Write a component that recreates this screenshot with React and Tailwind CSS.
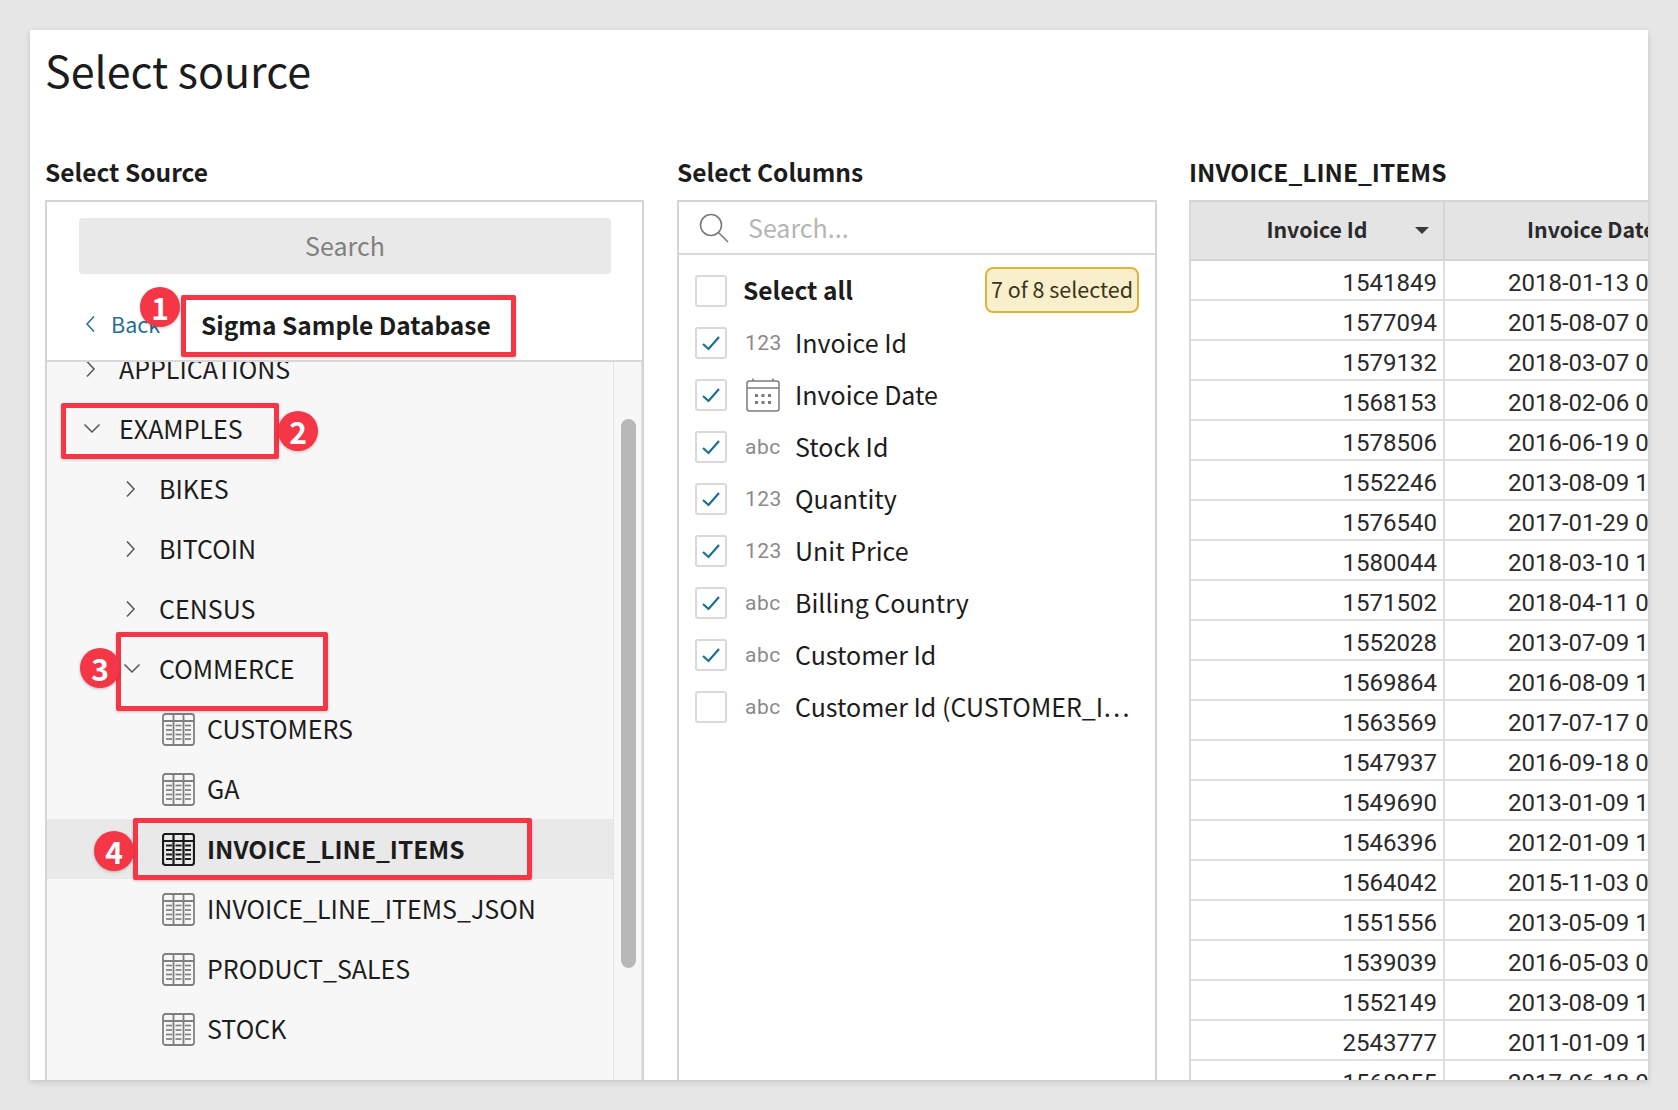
const sans = '"Noto Sans CJK SC", "Source Sans Pro", sans-serif';

function Chevron({ dir = 'right', className = 'text-[#555]' }) {
  const d = {
    right: 'M4 1.5 L11 9 L4 16.5',
    down: 'M1.5 4.5 L9 12 L16.5 4.5',
    left: 'M11 1.5 L4 9 L11 16.5',
  }[dir];
  return (
    <svg width="18" height="18" viewBox="0 0 18 18" fill="none" stroke="currentColor" strokeWidth="1.5" className={className}>
      <path d={d} />
    </svg>
  );
}

function TableIcon({ dark }) {
  const c = dark ? '#1a1a1a' : '#808080';
  const dashes = [];
  for (const x of [4, 13.5, 23]) {
    for (const y of [12.5, 17, 21.5, 26]) {
      dashes.push(<path key={x + '-' + y} d={`M${x} ${y} h6`} strokeWidth={dark ? 2 : 1.7} />);
    }
  }
  return (
    <svg width="33" height="33" viewBox="0 0 33 33" fill="none" stroke={c} strokeWidth={dark ? 2.2 : 1.8} className="shrink-0">
      <rect x="1" y="1" width="31" height="31" rx="2.5" />
      <path d="M1 8 H32 M11.5 1 V32 M21.5 1 V32" />
      {dashes}
    </svg>
  );
}

function TreeRow({ label, depth = 0, open, table, active }) {
  return (
    <div className={`flex h-[60px] items-center ${active ? 'bg-[#e9e9e9]' : ''}`}>
      {table ? (
        <div className="ml-[115px] flex items-center gap-[12px]">
          <TableIcon dark={active} />
          <span className={active ? 'text-[24.5px] font-semibold text-[#1c1c1c]' : ''}>{label}</span>
        </div>
      ) : (
        <div className={`flex items-center ${depth === 0 ? 'ml-[34px]' : 'ml-[74px]'}`}>
          <span className="w-[38px] pl-[2px]">
            <Chevron dir={open ? 'down' : 'right'} />
          </span>
          <span>{label}</span>
        </div>
      )}
    </div>
  );
}

function Badge({ n, className }) {
  return (
    <div className={`absolute flex h-[40px] w-[40px] items-center justify-center rounded-full bg-[#f53647] text-[30px] font-bold leading-none text-white shadow-[0_1px_3px_rgba(0,0,0,0.25)] ${className}`}>
      {n}
    </div>
  );
}

function RedBox({ className }) {
  return <div className={`absolute rounded-[2px] border-[5px] border-[#f53647] shadow-[0_1px_3px_rgba(0,0,0,0.2)] ${className}`} />;
}

function Check({ on }) {
  return (
    <div className="flex h-[32px] w-[32px] shrink-0 items-center justify-center rounded-[3px] border-2 border-[#d9d9d9] bg-white">
      {on && (
        <svg width="20" height="20" viewBox="0 0 20 20" fill="none" stroke="#1c6e93" strokeWidth="2.2">
          <path d="M2 11 L7.5 16 L18 4" />
        </svg>
      )}
    </div>
  );
}

function CalendarIcon() {
  return (
    <svg width="34" height="34" viewBox="0 0 34 34" fill="none" stroke="#7c7c7c" strokeWidth="1.5" className="ml-[1px] mb-[3px]">
      <rect x="1" y="3" width="32" height="30" rx="2.5" />
      <path d="M1 10 H33 M7 0.5 V3 M27 0.5 V3" />
      <g stroke="none" fill="#7c7c7c">
        <rect x="9" y="16" width="3" height="3" />
        <rect x="15.5" y="16" width="3" height="3" />
        <rect x="22" y="16" width="3" height="3" />
        <rect x="9" y="23" width="3" height="3" />
        <rect x="15.5" y="23" width="3" height="3" />
        <rect x="22" y="23" width="3" height="3" />
      </g>
    </svg>
  );
}

const columns = [
  ['123', 'Invoice Id', true],
  ['cal', 'Invoice Date', true],
  ['abc', 'Stock Id', true],
  ['123', 'Quantity', true],
  ['123', 'Unit Price', true],
  ['abc', 'Billing Country', true],
  ['abc', 'Customer Id', true],
  ['abc', 'Customer Id (CUSTOMER_I…', false],
];

const rows = [
  ['1541849', '2018-01-13 0'],
  ['1577094', '2015-08-07 0'],
  ['1579132', '2018-03-07 0'],
  ['1568153', '2018-02-06 0'],
  ['1578506', '2016-06-19 0'],
  ['1552246', '2013-08-09 1'],
  ['1576540', '2017-01-29 0'],
  ['1580044', '2018-03-10 1'],
  ['1571502', '2018-04-11 0'],
  ['1552028', '2013-07-09 1'],
  ['1569864', '2016-08-09 1'],
  ['1563569', '2017-07-17 0'],
  ['1547937', '2016-09-18 0'],
  ['1549690', '2013-01-09 1'],
  ['1546396', '2012-01-09 1'],
  ['1564042', '2015-11-03 0'],
  ['1551556', '2013-05-09 1'],
  ['1539039', '2016-05-03 0'],
  ['1552149', '2013-08-09 1'],
  ['2543777', '2011-01-09 1'],
  ['1568255', '2017-06-18 0'],
];

export default function App() {
  return (
    <div className="h-[1110px] w-full overflow-hidden bg-[#e6e6e6] pt-[30px] pl-[30px] pr-[30px]" style={{ fontFamily: sans }}>
      <div className="relative flex h-[1050px] flex-col overflow-hidden bg-white text-[#1c1c1c] shadow-[0_2px_6px_rgba(0,0,0,0.15)]">
        <h1 className="ml-[15px] mt-[9px] h-[60px] shrink-0 text-[43px] font-normal leading-[60px] text-[#1c1c1c]">Select source</h1>
        <div className="mt-[55px] flex min-h-0 flex-1 pl-[15px]">
          {/* Source */}
          <div className="flex w-[599px] shrink-0 flex-col">
            <div className="h-[46px] shrink-0 text-[24.5px] font-semibold leading-[36px]">Select Source</div>
            <div className="flex min-h-0 flex-1 flex-col border-x-2 border-t-2 border-[#d4d4d4]">
              <div className="h-[158px] shrink-0 bg-white">
                <div className="ml-[32px] mr-[31px] mt-[16px] flex h-[56px] items-center justify-center rounded-[4px] bg-[#e9e9e9] text-[25px] text-[#808080]">Search</div>
                <div className="ml-[36px] mt-[36px] flex h-[28px] items-center text-[21.5px] text-[#1f6f94]">
                  <Chevron dir="left" className="text-[#1f6f94]" />
                  <span className="ml-[10px]">Back</span>
                </div>
              </div>
              <div className="flex min-h-0 flex-1 border-t-2 border-[#d9d9d9] bg-[#f7f7f7]">
                <div className="min-w-0 flex-1 overflow-hidden text-[25px] text-[#1c1c1c]">
                  <div className="-mt-[23px]">
                    <TreeRow label="APPLICATIONS" />
                    <TreeRow label="EXAMPLES" open />
                    <TreeRow label="BIKES" depth={1} />
                    <TreeRow label="BITCOIN" depth={1} />
                    <TreeRow label="CENSUS" depth={1} />
                    <TreeRow label="COMMERCE" depth={1} open />
                    <TreeRow label="CUSTOMERS" table />
                    <TreeRow label="GA" table />
                    <TreeRow label="INVOICE_LINE_ITEMS" table active />
                    <TreeRow label="INVOICE_LINE_ITEMS_JSON" table />
                    <TreeRow label="PRODUCT_SALES" table />
                    <TreeRow label="STOCK" table />
                  </div>
                </div>
                <div className="w-[29px] shrink-0 border-x border-[#e4e4e4] pl-[7px] pt-[57px]">
                  <div className="h-[549px] w-[15px] rounded-full bg-[#b8b8b8]" />
                </div>
              </div>
            </div>
          </div>

          {/* Columns */}
          <div className="ml-[33px] flex w-[480px] shrink-0 flex-col">
            <div className="h-[46px] shrink-0 text-[24.5px] font-semibold leading-[36px]">Select Columns</div>
            <div className="flex min-h-0 flex-1 flex-col border-x-2 border-t-2 border-[#d4d4d4] pb-[8px]">
              <div className="flex h-[53px] shrink-0 items-center border-b-2 border-[#d9d9d9] pl-[20px]">
                <svg width="30" height="30" viewBox="0 0 30 30" fill="none" stroke="#7c7c7c" strokeWidth="1.6">
                  <circle cx="12" cy="12" r="10.5" />
                  <path d="M19.5 19.5 L29 29" />
                </svg>
                <span className="ml-[19px] text-[25px] text-[#b5b5b5]">Search...</span>
              </div>
              <div className="mt-[9px] flex h-[53px] shrink-0 items-center pl-[16px] pr-[16px]">
                <Check />
                <span className="ml-[16px] flex-1 text-[24.5px] font-semibold">Select all</span>
                <span className="mb-[2px] flex h-[46px] w-[154px] items-center justify-center whitespace-nowrap rounded-[8px] border-2 border-[#e0b43c] bg-[#f9f0cb] text-[21.5px] text-[#3a3420]">7 of 8 selected</span>
              </div>
              {columns.map(([type, name, on]) => (
                <div key={name} className="flex h-[52px] shrink-0 items-center pl-[16px]">
                  <Check on={on} />
                  <span className="ml-[18px] flex w-[50px] shrink-0 items-center pt-[2px] text-[21px] tracking-[0.5px] text-[#8a8a8a]" style={{ fontFamily: 'Roboto, sans-serif' }}>
                    {type === 'cal' ? <CalendarIcon /> : type}
                  </span>
                  <span className="whitespace-nowrap text-[25px] text-[#1c1c1c]">{name}</span>
                </div>
              ))}
            </div>
          </div>

          {/* Preview */}
          <div className="ml-[32px] flex min-w-0 flex-1 flex-col overflow-hidden">
            <div className="h-[46px] shrink-0 whitespace-nowrap text-[24.5px] font-semibold leading-[36px]">INVOICE_LINE_ITEMS</div>
            <div className="w-[600px] shrink-0 border-l-2 border-[#d9d9d9] text-[24px] text-[#2a2a2a]" style={{ fontFamily: 'Roboto, sans-serif' }}>
              <div className="flex h-[61px] border-y-2 border-[#d4d4d4] bg-[#e4e4e4] text-[21.3px] font-semibold text-[#2a2a2a]" style={{ fontFamily: sans }}>
                <div className="relative flex w-[254px] shrink-0 items-center justify-center border-r-2 border-[#d4d4d4] pb-[3px]">
                  <span>Invoice Id</span>
                  <div className="absolute right-[14px] top-[25px] h-0 w-0 border-x-[7px] border-t-[7px] border-x-transparent border-t-[#3a3a3a]" />
                </div>
                <div className="flex items-center whitespace-nowrap pb-[3px] pl-[82px]">Invoice Date</div>
              </div>
              {rows.map(([id, date]) => (
                <div key={id} className="flex h-[40px] border-b-2 border-[#e0e0e0] leading-[44px]">
                  <div className="w-[254px] shrink-0 border-r-2 border-[#e0e0e0] pr-[6px] text-right">{id}</div>
                  <div className="whitespace-nowrap pl-[63px]">{date}</div>
                </div>
              ))}
            </div>
          </div>
        </div>

        <RedBox className="left-[151px] top-[265px] h-[62px] w-[335px]" />
        <div className="absolute left-[171px] top-[275px] text-[24.5px] font-semibold leading-[40px] text-[#1c1c1c]">Sigma Sample Database</div>
        <Badge n="1" className="left-[110px] top-[257px]" />
        <RedBox className="left-[31px] top-[373px] h-[56px] w-[218px]" />
        <Badge n="2" className="left-[248px] top-[381px]" />
        <RedBox className="left-[86px] top-[602px] h-[79px] w-[212px]" />
        <Badge n="3" className="left-[50px] top-[618px]" />
        <RedBox className="left-[103px] top-[788px] h-[62px] w-[399px]" />
        <Badge n="4" className="left-[64px] top-[801px]" />
      </div>
    </div>
  );
}
